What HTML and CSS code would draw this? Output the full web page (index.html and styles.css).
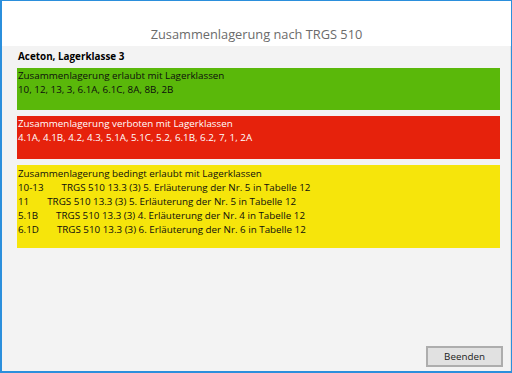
FILE: index.html
```html
<!DOCTYPE html>
<html lang="de">
<head>
  <meta charset="UTF-8">
  <title>Zusammenlagerung nach TRGS 510</title>
  <link rel="stylesheet" href="styles.css">
</head>
<body>
  <div class="window">
    <header class="title-bar">
      <h1>Zusammenlagerung nach TRGS 510</h1>
    </header>
    <main class="content">
      <h2 class="substance">Aceton, Lagerklasse 3</h2>
      <section class="box box-allowed">
        <p>Zusammenlagerung erlaubt mit Lagerklassen</p>
        <p>10, 12, 13, 3, 6.1A, 6.1C, 8A, 8B, 2B</p>
      </section>
      <section class="box box-forbidden">
        <p>Zusammenlagerung verboten mit Lagerklassen</p>
        <p>4.1A, 4.1B, 4.2, 4.3, 5.1A, 5.1C, 5.2, 6.1B, 6.2, 7, 1, 2A</p>
      </section>
      <section class="box box-conditional">
        <p>Zusammenlagerung bedingt erlaubt mit Lagerklassen</p>
        <p><span class="cls">10-13</span>TRGS 510 13.3 (3) 5. Erläuterung der Nr. 5 in Tabelle 12</p>
        <p><span class="cls">11</span>TRGS 510 13.3 (3) 5. Erläuterung der Nr. 5 in Tabelle 12</p>
        <p><span class="cls">5.1B</span>TRGS 510 13.3 (3) 4. Erläuterung der Nr. 4 in Tabelle 12</p>
        <p><span class="cls">6.1D</span>TRGS 510 13.3 (3) 6. Erläuterung der Nr. 6 in Tabelle 12</p>
      </section>
      <div class="actions">
        <button type="button">Beenden</button>
      </div>
    </main>
  </div>
</body>
</html>
```

FILE: styles.css
```css
* {
  box-sizing: border-box;
}
body {
  margin: 0;
  font-family: "Open Sans", "Noto Sans", sans-serif;
  font-size: 9.8px;
  color: #0d0d0d;
}
.window {
  width: 512px;
  height: 373px;
  border: 1px solid #2b8fdc;
  border-left-width: 2px;
  border-bottom-width: 2px;
  display: flex;
  flex-direction: column;
}
.title-bar {
  height: 45px;
  background: #fff;
  display: flex;
  align-items: flex-end;
  justify-content: center;
  padding-bottom: 3px;
}
.title-bar h1 {
  margin: 0;
  font-size: 12.8px;
  font-weight: normal;
  color: #6b6b6b;
}
.content {
  flex: 1;
  background: #f3f3f3;
  border-right: 1px solid #e2e2e2;
  padding: 3px 10px 4px 15px;
  display: flex;
  flex-direction: column;
}
.substance {
  margin: 0 0 4px 1px;
  font-size: 9.9px;
  font-weight: bold;
  color: #000;
  line-height: 15px;
}
.box {
  margin-bottom: 6px;
  padding: 1px 1px 0;
  line-height: 14px;
}
.box p {
  margin: 0;
}
.box-allowed {
  height: 42px;
  background: #5ab80a;
}
.box-forbidden {
  height: 43px;
  background: #e6220c;
  color: #fff;
}
.box-conditional {
  height: 83px;
  background: #f6e50b;
  padding-top: 2px;
}
.cls {
  margin-right: 18px;
}
.actions {
  margin-top: auto;
  display: flex;
  justify-content: flex-end;
}
.actions button {
  width: 77px;
  height: 21px;
  margin-right: -3px;
  font-family: inherit;
  font-size: 9.8px;
  color: #1a1a1a;
  background: #e1e1e1;
  border: 2px solid #adadad;
}
```
